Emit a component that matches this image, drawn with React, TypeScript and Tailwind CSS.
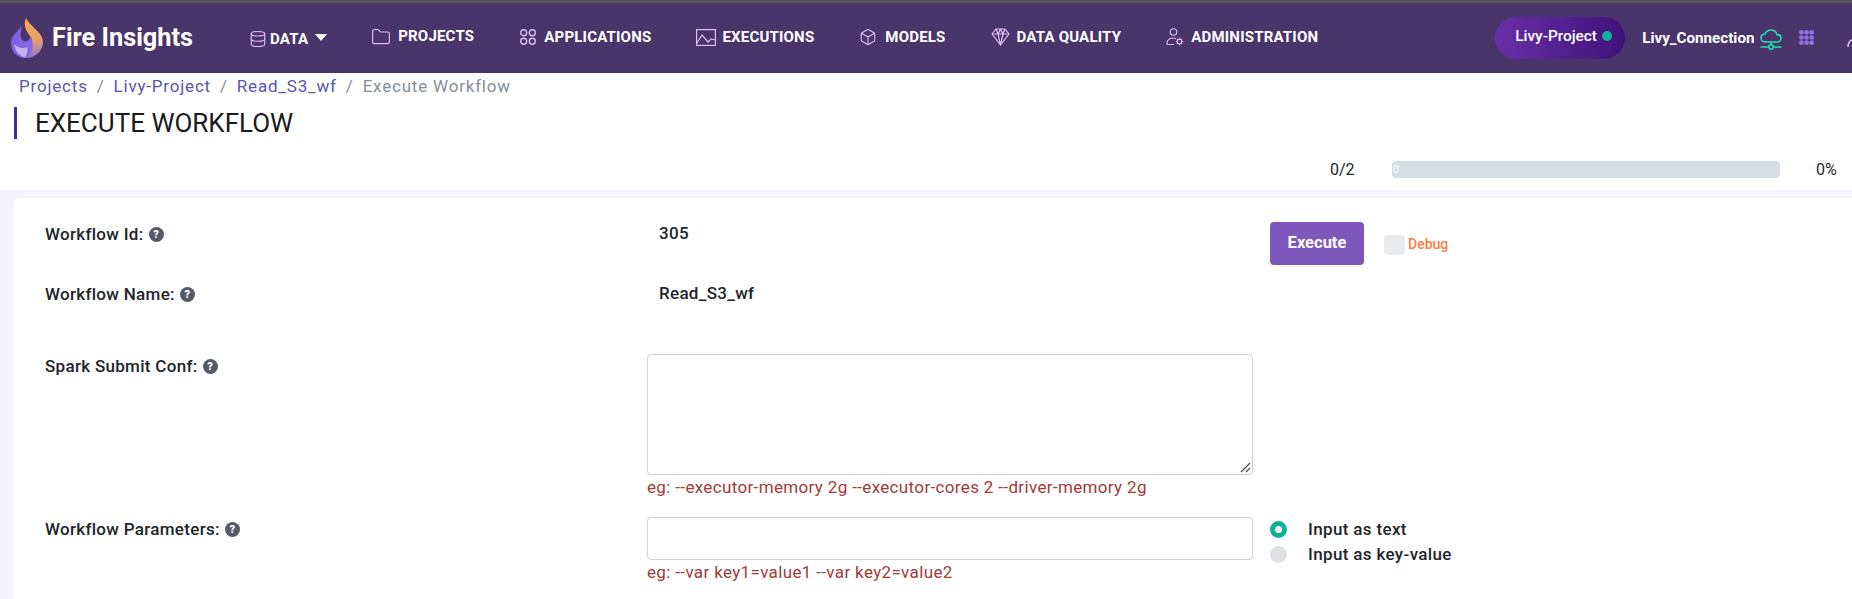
import React from "react";
import { Database, Folder, Box } from "lucide-react";

const font = { fontFamily: "Roboto, 'Liberation Sans', sans-serif" };
const stroke = "#e4bdf0";

function Logo() {
  return (
    <svg width="32" height="41" viewBox="0 0 32 41" className="shrink-0">
      <defs>
        <linearGradient id="f1" x1="0.4" y1="0" x2="0.5" y2="1">
          <stop offset="0" stopColor="#f7a94a" />
          <stop offset="0.55" stopColor="#e6a268" />
          <stop offset="1" stopColor="#9a78c8" />
        </linearGradient>
        <linearGradient id="f2" x1="0" y1="0" x2="1" y2="1">
          <stop offset="0" stopColor="#7a58e6" />
          <stop offset="1" stopColor="#8f6fe0" />
        </linearGradient>
      </defs>
      <path d="M10 8C11 12 9 17 10 20c1 3 4 4 6 3 2-1 3-2 3-4l6 10-5 10c-2 1-4 1-6 1C6 40 0 33 0 25 0 17 7 14 10 8z" fill="url(#f2)" />
      <path d="M3 26c4 4 9 5 13 3 1 4 0 7-2 10C8 38 4 33 3 26z" fill="#c3b2f2" />
      <path d="M15 0c-3 7 0 13 4 18 4 6 4 14-1 22 8-2 14-8 14-16C32 14 20 10 15 0z" fill="url(#f1)" />
    </svg>
  );
}

function AppsIcon() {
  return (
    <svg width="15" height="15" viewBox="0 0 16 16" fill="#9370e6">
      {[2.5, 8, 13.5].map((y) =>
        [2.5, 8, 13.5].map((x) => <circle key={`${x}-${y}`} cx={x} cy={y} r="2.5" />)
      )}
    </svg>
  );
}

function FourCircles() {
  return (
    <svg width="18" height="18" viewBox="0 0 18 18" fill="none" stroke={stroke} strokeWidth="1.4">
      <circle cx="4.7" cy="4.7" r="3" />
      <circle cx="13.3" cy="4.7" r="3" />
      <circle cx="4.7" cy="13.3" r="3" />
      <circle cx="13.3" cy="13.3" r="3" />
    </svg>
  );
}

function ExecIcon() {
  return (
    <svg width="20" height="17" viewBox="0 0 20 17" fill="none" stroke={stroke} strokeWidth="1.2">
      <rect x="0.6" y="0.6" width="18.8" height="15.8" />
      <path d="M1 14l5-8 6 7 3-3 4 1" />
    </svg>
  );
}

function GemIcon() {
  return (
    <svg width="19" height="18" viewBox="0 0 19 18" fill="none" stroke={stroke} strokeWidth="1.2" strokeLinejoin="round">
      <path d="M5 1h9l4 5-8.500 11L1 6z" />
      <path d="M1 6h17M5 1l2 5 2.500 11L12 6l2-5M7 6l2.500-5L12 6" />
    </svg>
  );
}

function AdminIcon() {
  return (
    <svg width="18" height="18" viewBox="0 0 18 18" fill="none" stroke={stroke} strokeWidth="1.1">
      <circle cx="7.500" cy="4" r="3.300" />
      <path d="M1 16.500v-1.500c0-3 3-5 6-5 1 0 2 .2 3 .7M1 16.500h7" />
      <circle cx="13.500" cy="13.500" r="2.300" />
      <path d="M13.500 9.800v1.400M13.500 15.800v1.400M9.800 13.500h1.400M15.800 13.500h1.400M10.900 10.900l1 1M15.100 15.100l1 1M10.900 16.100l1-1M15.100 11.900l1-1" />
    </svg>
  );
}

function UserEdge() {
  return (
    <svg width="20" height="20" viewBox="0 0 20 20" fill="none" stroke={stroke} strokeWidth="1.6">
      <circle cx="11" cy="5" r="4" />
      <path d="M2 18c0-5 3-8 9-8s9 3 9 8" />
    </svg>
  );
}

function CloudNet() {
  return (
    <svg width="22" height="21" viewBox="0 0 22 21" fill="none" stroke="#1de2b0" strokeWidth="1.600">
      <path d="M5.500 13C3 13 1 11.200 1 8.800 1 6.500 3 4.800 5 5 6 2.500 8.300 1 11 1c3 0 5.300 2 6 4.600 2.300 0 4 1.500 4 3.600 0 2.200-1.800 3.800-4 3.800z" />
      <path d="M11 13v3M0.500 18h8M13.500 18h8" />
      <circle cx="11" cy="18" r="2.200" />
    </svg>
  );
}

function NavItem({ icon, label, className }: { icon: React.ReactNode; label: string; className: string }) {
  return (
    <div className={`flex shrink-0 items-center whitespace-nowrap text-[15px] font-bold tracking-[0.2px] text-white ${className}`}>
      {icon}
      <span>{label}</span>
    </div>
  );
}

function Help() {
  return (
    <span className="ml-[5px] inline-flex h-[15px] w-[15px] items-center justify-center rounded-full bg-[#555a66] text-[11px] font-black leading-none tracking-normal text-white">
      ?
    </span>
  );
}

function Label({ children }: { children: string }) {
  return (
    <div className="flex w-[633px] shrink-0 items-center pl-[31px] text-[17px] font-medium leading-[20px] tracking-[0.3px] text-[#212529]">
      {children}
      <Help />
    </div>
  );
}

const hint = "text-[17px] leading-[20px] tracking-[0.35px] text-[#a33a3a]";

export default function App() {
  return (
    <div style={font} className="h-[599px] w-[1852px] overflow-hidden bg-white">
      <div className="h-[3px] bg-[#555555]" />
      <header className="flex h-[70px] items-center overflow-hidden bg-[#4a356b]">
        <div className="ml-[11px] flex shrink-0 items-center gap-[9px]">
          <Logo />
          <span className="whitespace-nowrap text-[25.3px] font-bold leading-none text-white">Fire Insights</span>
        </div>
        <div className="ml-[56px] flex shrink-0 items-center">
          <NavItem className="mt-[2px] gap-[3px]" icon={<Database size={18} color={stroke} strokeWidth={1.5} />} label="DATA" />
          <span className="ml-[7px] mt-[-2px] h-0 w-0 border-x-[6px] border-t-[7px] border-x-transparent border-t-white" />
        </div>
        <NavItem className="ml-[44px] mt-[-3px] gap-[7px]" icon={<Folder size={20} color={stroke} strokeWidth={1.4} />} label="PROJECTS" />
        <NavItem className="ml-[45px] mt-[-2px] gap-[7px]" icon={<FourCircles />} label="APPLICATIONS" />
        <NavItem className="ml-[45px] mt-[-2px] gap-[6px]" icon={<ExecIcon />} label="EXECUTIONS" />
        <NavItem className="ml-[45px] mt-[-2px] gap-[8px]" icon={<Box size={18} color={stroke} strokeWidth={1.4} />} label="MODELS" />
        <NavItem className="ml-[45px] mt-[-2px] gap-[7px]" icon={<GemIcon />} label="DATA QUALITY" />
        <NavItem className="ml-[45px] mt-[-2px] gap-[7px]" icon={<AdminIcon />} label="ADMINISTRATION" />
        <div className="ml-[177px] flex shrink-0 items-center">
          <div className="mt-[-1px] flex h-[42px] w-[130px] items-center whitespace-nowrap rounded-[21px] bg-gradient-to-r from-[#6a2fa8] to-[#3f1279] pl-[20px]">
            <span className="mt-[-2px] text-[15.4px] font-medium text-white">Livy-Project</span>
            <span className="ml-[5px] mt-[-4px] h-[10px] w-[10px] rounded-full bg-[#0fb09a]" />
          </div>
          <span className="ml-[17px] whitespace-nowrap text-[15.2px] font-bold text-white">Livy_Connection</span>
          <span className="ml-[6px] mt-[2px]"><CloudNet /></span>
          <span className="ml-[17px] mt-[-1px]"><AppsIcon /></span>
          <span className="ml-[32px] mt-[2px]"><UserEdge /></span>
        </div>
      </header>

      <nav className="ml-[19px] flex h-[27px] items-center text-[17px] tracking-[0.8px]">
        <span className="text-[#5a54b0]">Projects</span>
        <span className="mx-[9px] text-[#868e96]">/</span>
        <span className="text-[#5a54b0]">Livy-Project</span>
        <span className="mx-[9px] text-[#868e96]">/</span>
        <span className="text-[#5a54b0]">Read_S3_wf</span>
        <span className="mx-[9px] text-[#868e96]">/</span>
        <span className="text-[#868e96]">Execute Workflow</span>
      </nav>

      <div className="ml-[14px] mt-[7px] flex h-[32px] items-center border-l-[3px] border-[#4a2a8c] pl-[18px] text-[26px] leading-none text-[#1a1a1a]">
        EXECUTE WORKFLOW
      </div>

      <div className="mt-[21px] flex h-[19px] items-center text-[16px] text-[#212529]">
        <span className="ml-[1330px] w-[62px]">0/2</span>
        <div className="flex h-[17px] w-[388px] items-center rounded-[4px] bg-[#d6dee5] pl-[1px] text-[10px] text-white">0</div>
        <span className="ml-[36px]">0%</span>
      </div>

      <main className="mt-[11px] h-[409px] bg-[#f5f4fe] pl-[14px] pt-[8px]">
        <div className="h-[401px] rounded-tl-[6px] bg-white pt-[26px] text-[17px] text-[#212529]">
          <div className="flex h-[20px] items-center">
            <Label>Workflow Id:</Label>
            <span className="ml-[12px] w-[611px] font-medium tracking-[0.3px]">305</span>
            <div className="mt-[19px] flex items-center">
              <button className="h-[43px] w-[94px] rounded-[4px] bg-[#7e57bb] text-[16.5px] font-bold text-white">Execute</button>
              <span className="ml-[20px] mt-[2px] h-[20px] w-[21px] rounded-[4px] bg-[#e9ecef]" />
              <span className="ml-[3px] mt-[2px] text-[14px] font-medium text-[#ff7a45]">Debug</span>
            </div>
          </div>
          <div className="mt-[40px] flex h-[20px] items-center">
            <Label>Workflow Name:</Label>
            <span className="ml-[12px] font-medium tracking-[0.3px]">Read_S3_wf</span>
          </div>
          <div className="mt-[52px] flex items-start">
            <Label>Spark Submit Conf:</Label>
            <div className="mt-[-2px]">
              <div className="relative">
                <textarea className="block h-[121px] w-[606px] resize-none rounded-[4px] border border-[#ced4da] bg-white" readOnly />
                <svg width="11" height="11" viewBox="0 0 11 11" stroke="#444444" strokeWidth="1.1" className="absolute bottom-[2px] right-[2px]">
                  <path d="M1 10L10 1M6 10l4-4" />
                </svg>
              </div>
              <p className={`mt-[2px] ${hint}`}>eg: --executor-memory 2g --executor-cores 2 --driver-memory 2g</p>
            </div>
          </div>
          <div className="mt-[22px] flex items-start">
            <Label>Workflow Parameters:</Label>
            <div className="mt-[-2px]">
              <input readOnly className="block h-[43px] w-[606px] rounded-[4px] border border-[#ced4da] bg-white" />
              <p className={`mt-[2px] ${hint}`}>eg: --var key1=value1 --var key2=value2</p>
            </div>
            <div className="ml-[17px] mt-[-2px] flex flex-col gap-[8px] pt-[4px] font-medium leading-[17px] tracking-[0.35px]">
              <div className="flex items-center">
                <span className="h-[17px] w-[17px] rounded-full border-[5px] border-[#0fb09a] bg-white" />
                <span className="ml-[21px] whitespace-nowrap">Input as text</span>
              </div>
              <div className="flex items-center">
                <span className="h-[17px] w-[17px] rounded-full bg-[#dee2e6]" />
                <span className="ml-[21px] whitespace-nowrap">Input as key-value</span>
              </div>
            </div>
          </div>
        </div>
      </main>
    </div>
  );
}
